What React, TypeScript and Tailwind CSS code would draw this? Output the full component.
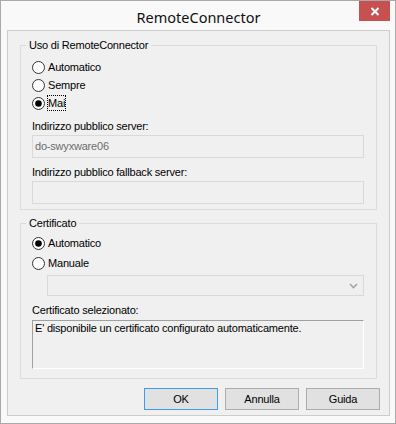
import React from "react";

function Radio({ checked }: { checked?: boolean }) {
  return (
    <svg width="13" height="13" viewBox="0 0 13 13" className="shrink-0">
      <circle cx="6.5" cy="6.5" r="6" fill="#ffffff" stroke="#333333" strokeWidth="1" />
      {checked && <circle cx="6.5" cy="6.5" r="3.3" fill="#000000" />}
    </svg>
  );
}

function RadioRow({
  label,
  checked,
  focused,
  className = "",
}: {
  label: string;
  checked?: boolean;
  focused?: boolean;
  className?: string;
}) {
  return (
    <div className={"flex items-center h-[18px] " + className}>
      <Radio checked={checked} />
      <span
        className={
          "ml-[3px] leading-[14px] " +
          (focused ? "outline outline-1 outline-dotted outline-black" : "")
        }
      >
        {label}
      </span>
    </div>
  );
}

function Group({
  title,
  children,
  className = "",
}: {
  title: string;
  children: React.ReactNode;
  className?: string;
}) {
  return (
    <div className={"relative border border-[#dcdcdc] " + className}>
      <div className="absolute left-[5px] -top-[8px] px-[3px] bg-[#f0f0f0] leading-[14px]">
        {title}
      </div>
      {children}
    </div>
  );
}

export default function App() {
  return (
    <div
      className="w-[396px] h-[424px] border border-[#a9a9a9] bg-[#f9f9f9] flex flex-col pl-[6px] pr-[5px] pb-[7px] text-[11px] tracking-[-0.2px] text-black"
      style={{ fontFamily: '"Liberation Sans", Arial, sans-serif' }}
    >
      <div className="relative h-[29px] shrink-0 flex items-center justify-center">
        <span
          className="text-[14.5px] leading-[20px] tracking-normal text-[#111] pt-[2px]"
          style={{ fontFamily: '"Noto Sans", "Open Sans", sans-serif' }}
        >
          RemoteConnector
        </span>
        <div className="absolute top-0 right-[0px] w-[31px] h-[20px] bg-[#c75050] flex items-center justify-center">
          <svg width="10" height="9" viewBox="0 0 10 9">
            <path d="M1.5 1 L8.5 8 M8.5 1 L1.5 8" stroke="#ffffff" strokeWidth="2" />
          </svg>
        </div>
      </div>
      <div className="flex-1 border border-[#cccccc] bg-[#f0f0f0] flex flex-col">
        <div className="pl-[12px] pt-[14px] pr-[12px]">
          <Group title="Uso di RemoteConnector" className="h-[165px]">
            <div className="pl-[11px] pt-[12px] flex flex-col">
              <RadioRow label="Automatico" />
              <RadioRow label="Sempre" />
              <RadioRow label="Mai" checked focused />
              <div className="mt-[7px] leading-[14px]">Indirizzo pubblico server:</div>
              <div className="mt-[2px] w-[332px] h-[23px] border border-[#d9d9d9] bg-[#f0f0f0] flex items-center pl-[2px] text-[#6d6d6d]">
                do-swyxware06
              </div>
              <div className="mt-[7px] leading-[14px]">Indirizzo pubblico fallback server:</div>
              <div className="mt-[2px] w-[332px] h-[23px] border border-[#d9d9d9] bg-[#f0f0f0]" />
            </div>
          </Group>
          <Group title="Certificato" className="mt-[13px] h-[156px]">
            <div className="pl-[11px] pt-[10px] flex flex-col">
              <RadioRow label="Automatico" checked />
              <RadioRow label="Manuale" className="mt-[2px]" />
              <div className="mt-[3px] ml-[15px] w-[317px] h-[21px] border border-[#d9d9d9] bg-[#efefef] flex items-center justify-end pr-[5px]">
                <svg width="9" height="6" viewBox="0 0 9 6">
                  <path d="M1 1 L4.5 4.5 L8 1" stroke="#a6a6a6" strokeWidth="1.6" fill="none" />
                </svg>
              </div>
              <div className="mt-[7px] leading-[14px]">Certificato selezionato:</div>
              <div className="mt-[3px] w-[332px] h-[49px] border-t border-l border-t-[#a0a0a0] border-l-[#a0a0a0] border-r border-b border-r-[#ffffff] border-b-[#ffffff] bg-[#f0f0f0] pl-[2px] leading-[14px]">
                E' disponibile un certificato configurato automaticamente.
              </div>
            </div>
          </Group>
        </div>
        <div className="mt-[9px] flex justify-end gap-[7px] pr-[9px]">
          <div className="w-[74px] h-[22px] border border-[#3c9cf0] bg-[#e1e1e1] flex items-center justify-center">
            OK
          </div>
          <div className="w-[74px] h-[22px] border border-[#adadad] bg-[#e1e1e1] flex items-center justify-center">
            Annulla
          </div>
          <div className="w-[74px] h-[22px] border border-[#adadad] bg-[#e1e1e1] flex items-center justify-center">
            Guida
          </div>
        </div>
      </div>
    </div>
  );
}
